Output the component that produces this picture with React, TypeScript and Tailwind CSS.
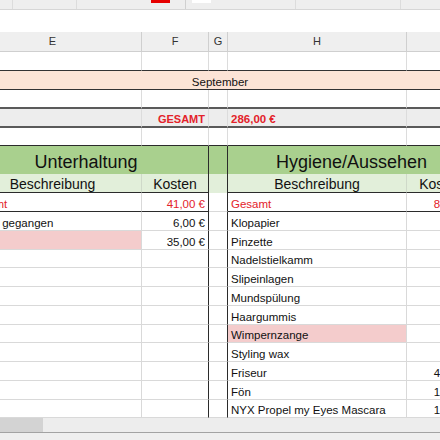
import React from "react";

const cols = "grid grid-cols-[178px_67px_19px_179px_69px_80px]";
const red = "text-[#e3222a]";

type Item = { name: string; cost: string; pink?: boolean };

const leftItems: Item[] = [
  { name: "Essen gegangen", cost: "6,00 €" },
  { name: "", cost: "35,00 €", pink: true },
];

const rightItems: Item[] = [
  { name: "Klopapier", cost: "2,99 €" },
  { name: "Pinzette", cost: "1,49 €" },
  { name: "Nadelstielkamm", cost: "1,95 €" },
  { name: "Slipeinlagen", cost: "2,25 €" },
  { name: "Mundspülung", cost: "3,45 €" },
  { name: "Haargummis", cost: "1,29 €" },
  { name: "Wimpernzange", cost: "5,95 €", pink: true },
  { name: "Styling wax", cost: "3,95 €" },
  { name: "Friseur", cost: "47,00 €" },
  { name: "Fön", cost: "10,00 €" },
  { name: "NYX Propel my Eyes Mascara", cost: "12,99 €" },
  { name: "", cost: "" },
];

function Toolbar() {
  return (
    <div className="flex h-[10px] shrink-0 border-b border-[#d6d6d6] bg-[#eeeeee]">
      <div className="w-[13px] border-r border-[#dcdcdc]" />
      <div className="w-[64px] border-r border-[#dcdcdc]" />
      <div className="w-[109px] border-r border-[#d0d0d0]">
        <div className="ml-[74px] h-[3px] w-[19px] bg-[#e60000]" />
      </div>
      <div className="w-[110px] border-r border-[#dcdcdc]">
        <div className="ml-[6px] h-[3px] w-[19px] bg-white" />
      </div>
      <div className="w-[105px] border-r border-[#dcdcdc]" />
      <div className="flex-1" />
    </div>
  );
}

function ColumnHeader() {
  // I and J sit off the right edge, so no letter is shown for them
  const letters = ["E", "F", "G", "H", "", ""];
  return (
    <div className={`${cols} h-[20px] bg-[#efefef] text-[11px] text-[#333]`}>
      {letters.map((l, i) => (
        <div key={i} className="flex items-center justify-center border-r border-b border-[#cfcfcf]">
          {l}
        </div>
      ))}
    </div>
  );
}

function ItemRow({ left, right }: { left?: Item; right?: Item }) {
  return (
    <div className={`${cols} h-[18.75px]`}>
      <div className={`flex items-end overflow-hidden whitespace-nowrap border-r border-b border-[#d9d9d9] pl-[3px] ${left?.pink ? "bg-[#f4cccc]" : ""}`}>
        {left?.name}
      </div>
      <div className="flex items-end justify-end border-r border-b border-r-[#2b2b2b] border-b-[#d9d9d9] pr-[3px]">
        {left?.cost}
      </div>
      <div className="border-r border-b border-r-[#2b2b2b] border-b-[#d9d9d9]" />
      <div className={`flex items-end overflow-hidden whitespace-nowrap border-r border-b border-[#d9d9d9] pl-[3px] ${right?.pink ? "bg-[#f4cccc]" : ""}`}>
        {right?.name}
      </div>
      <div className="flex items-end justify-end border-r border-b border-[#d9d9d9] pr-[3px]">
        {right?.cost}
      </div>
      <div className="border-b border-[#d9d9d9]" />
    </div>
  );
}

export default function App() {
  return (
    <div className="flex h-[440px] w-[440px] flex-col overflow-hidden bg-white font-['Liberation_Sans',Arial,sans-serif] text-[11.5px] leading-[13px] text-[#111]">
      <Toolbar />
      <div className="h-[22px] shrink-0" />
      <div className="flex-1 overflow-hidden">
        <div className="-ml-[36px] w-[600px]">
          <ColumnHeader />

          {/* blank */}
          <div className={`${cols} h-[19px]`}>
            <div className="border-r border-b border-r-[#dcdcdc] border-b-[#333]" />
            <div className="border-r border-b border-r-[#dcdcdc] border-b-[#333]" />
            <div className="border-r border-b border-r-[#dcdcdc] border-b-[#333]" />
            <div className="border-r border-b border-r-[#dcdcdc] border-b-[#333]" />
            <div className="border-r border-b border-r-[#dcdcdc] border-b-[#333]" />
            <div className="border-b border-[#333]" />
          </div>

          {/* September */}
          <div className={`${cols} h-[19px]`}>
            <div className="col-span-5 flex items-end justify-center border-b border-[#333] bg-[#fce4d6]">
              September
            </div>
            <div className="border-b border-[#333] bg-[#fce4d6]" />
          </div>

          {/* blank */}
          <div className={`${cols} h-[19px]`}>
            {[0, 1, 2, 3, 4].map((i) => (
              <div key={i} className="border-r border-b-2 border-r-[#dcdcdc] border-b-[#5a5a5a]" />
            ))}
            <div className="border-b-2 border-[#5a5a5a]" />
          </div>

          {/* GESAMT */}
          <div className={`${cols} h-[19px] bg-[#ededed] font-bold ${red}`}>
            <div className="border-r border-b-2 border-r-[#dcdcdc] border-b-[#5a5a5a]" />
            <div className="flex items-end justify-end border-r border-b-2 border-r-[#dcdcdc] border-b-[#5a5a5a] pr-[3px] text-[11px]">
              GESAMT
            </div>
            <div className="border-r border-b-2 border-r-[#dcdcdc] border-b-[#5a5a5a]" />
            <div className="flex items-end border-r border-b-2 border-r-[#dcdcdc] border-b-[#5a5a5a] pl-[3px]">
              286,00 €
            </div>
            <div className="border-r border-b-2 border-r-[#dcdcdc] border-b-[#5a5a5a]" />
            <div className="border-b-2 border-[#5a5a5a]" />
          </div>

          {/* blank above tables */}
          <div className={`${cols} h-[18px]`}>
            <div className="border-r border-b border-r-[#dcdcdc] border-b-[#2b2b2b]" />
            <div className="border-r border-b border-r-[#dcdcdc] border-b-[#2b2b2b]" />
            <div className="border-r border-b border-r-[#dcdcdc] border-b-[#2b2b2b]" />
            <div className="border-r border-b border-r-[#dcdcdc] border-b-[#2b2b2b]" />
            <div className="border-r border-b border-r-[#dcdcdc] border-b-[#2b2b2b]" />
            <div className="border-b border-[#dcdcdc]" />
          </div>

          {/* table titles */}
          <div className={`${cols} h-[28px] bg-[#a9d08e] text-[18px] leading-[20px]`}>
            <div className="col-span-2 flex items-end justify-center border-r border-[#2b2b2b] pb-[2px]">
              Unterhaltung
            </div>
            <div className="border-r border-[#2b2b2b]" />
            <div className="col-span-2 flex items-end justify-center border-r border-[#d9d9d9] pb-[2px]">
              Hygiene/Aussehen
            </div>
            <div className="bg-white" />
          </div>

          {/* sub headers */}
          <div className={`${cols} h-[19px] bg-[#e2efda] text-[14px] leading-[16px]`}>
            <div className="flex items-end justify-center border-r border-b border-r-[#cfd9c9] border-b-[#2b2b2b]">
              Beschreibung
            </div>
            <div className="flex items-end justify-center border-r border-b border-[#2b2b2b]">
              Kosten
            </div>
            <div className="border-r border-[#2b2b2b]" />
            <div className="flex items-end justify-center border-r border-b border-r-[#cfd9c9] border-b-[#2b2b2b]">
              Beschreibung
            </div>
            <div className="flex items-end justify-center whitespace-nowrap border-r border-b border-r-[#d9d9d9] border-b-[#2b2b2b]">
              Kosten
            </div>
            <div className="bg-white border-b border-[#d9d9d9]" />
          </div>

          {/* Gesamt */}
          <div className={`${cols} h-[19px] ${red}`}>
            <div className="flex items-end border-r border-b border-r-[#d9d9d9] border-b-[#2b2b2b] pl-[3px]">
              Gesamt
            </div>
            <div className="flex items-end justify-end border-r border-b border-[#2b2b2b] pr-[3px]">
              41,00 €
            </div>
            <div className="border-r border-b border-r-[#2b2b2b] border-b-[#d9d9d9]" />
            <div className="flex items-end border-r border-b border-r-[#d9d9d9] border-b-[#2b2b2b] pl-[3px]">
              Gesamt
            </div>
            <div className="flex items-end justify-end border-r border-b border-r-[#d9d9d9] border-b-[#2b2b2b] pr-[3px]">
              84,31 €
            </div>
            <div className="border-b border-[#d9d9d9]" />
          </div>

          {rightItems.map((item, i) => (
            <ItemRow key={i} left={leftItems[i]} right={item} />
          ))}
        </div>
      </div>

      {/* horizontal scrollbar */}
      <div className="h-[14px] shrink-0 bg-[#ededed]">
        <div className="h-full w-[43px] bg-[#d3d3d3]" />
      </div>
      <div className="h-[8px] shrink-0 border-t border-[#a3a3a3] bg-[#efefef]" />
    </div>
  );
}
